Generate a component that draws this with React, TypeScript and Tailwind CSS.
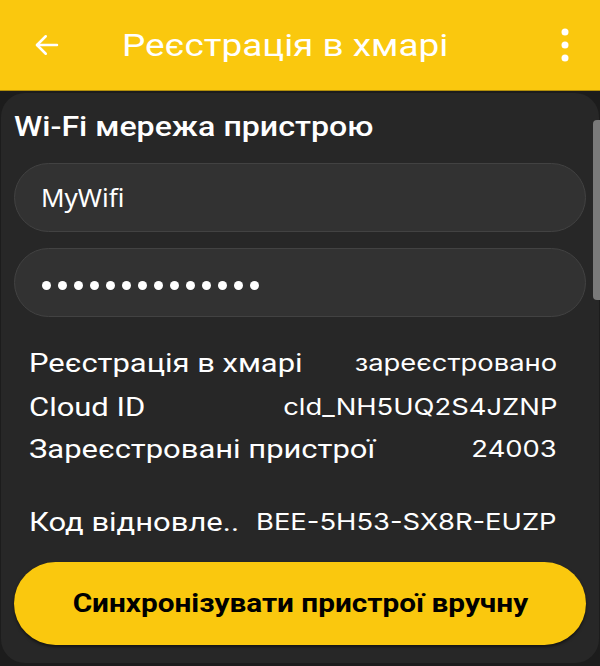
import React from "react";

const sx = "inline-block origin-left scale-x-[1.19] whitespace-nowrap";
const sxr = "inline-block origin-right scale-x-[1.19] whitespace-nowrap";

export default function App() {
  return (
    <div className="w-[600px] h-[666px] bg-[#1c1c1c] flex flex-col overflow-hidden" style={{ fontFamily: "Roboto, 'Noto Sans', sans-serif" }}>
      <div className="h-[91px] shrink-0 bg-[#fac80e] flex items-center pl-[32px] pr-[30px] border-b border-[#b38f0a]">
        <svg width="30" height="30" viewBox="0 0 24 24" fill="none" stroke="#fff" strokeWidth="2" strokeLinecap="round" strokeLinejoin="round">
          <path d="M20 12H4" />
          <path d="M11 5l-7 7 7 7" />
        </svg>
        <div className="ml-[60px] text-white text-[31px] leading-none flex-1">
          <span className={sx}>Реєстрація в хмарі</span>
        </div>
        <svg width="10" height="34" viewBox="0 0 10 34">
          <circle cx="5" cy="4" r="3.5" fill="#fff" />
          <circle cx="5" cy="17" r="3.5" fill="#fff" />
          <circle cx="5" cy="30" r="3.5" fill="#fff" />
        </svg>
      </div>
      <div className="relative mt-[2px] mx-[1px] flex-1 mb-[3px] bg-[#272727] rounded-[24px] flex flex-col px-[13px] pt-[16px]">
        <div className="absolute right-[-1px] top-[27px] w-[7px] h-[180px] rounded-l-[4px] bg-[#7a7a7a]" />
        <div className="text-white text-[27px] leading-[36px] font-medium">
          <span className={sx}>Wi-Fi мережа пристрою</span>
        </div>
        <div className="mt-[18px] h-[69px] rounded-full bg-[#323232] border border-[#424242] flex items-center pl-[26px] text-white text-[26px]" style={{ fontFamily: "'Noto Sans', sans-serif" }}>MyWifi</div>
        <div className="mt-[16px] h-[69px] rounded-full bg-[#323232] border border-[#424242] flex items-center pl-[27px] pt-[6px] gap-[7px]">
          {Array.from({ length: 14 }).map((_, i) => (
            <span key={i} className="w-[9px] h-[9px] rounded-full bg-white" />
          ))}
        </div>
        <div className="mt-[24px] pl-[15px] pr-[29px] text-white flex flex-col">
          <div className="flex justify-between items-center h-[44px]">
            <span className={`${sx} text-[26px]`}>Реєстрація в хмарі</span>
            <span className={`${sxr} text-[23px]`} style={{ fontFamily: "Inter, sans-serif" }}>зареєстровано</span>
          </div>
          <div className="flex justify-between items-center h-[44px]">
            <span className={`${sx} text-[26px]`}>Cloud ID</span>
            <span className={`${sxr} text-[23px]`} style={{ fontFamily: "Inter, sans-serif" }}>cld_NH5UQ2S4JZNP</span>
          </div>
          <div className="flex justify-between items-center h-[41px]">
            <span className={`${sx} text-[26px]`}>Зареєстровані пристрої</span>
            <span className={`${sxr} text-[23px]`} style={{ fontFamily: "Inter, sans-serif" }}>24003</span>
          </div>
          <div className="flex justify-between items-center h-[41px] mt-[32px]">
            <span className={`${sx} text-[26px]`}>Код відновле..</span>
            <span className={`${sxr} text-[23px]`} style={{ fontFamily: "Inter, sans-serif" }}>BEE-5H53-SX8R-EUZP</span>
          </div>
        </div>
        <button className="mt-[19px] h-[83px] rounded-full bg-[#fac80e] flex items-center justify-center text-black text-[25px] font-bold shadow-[0_2px_3px_rgba(0,0,0,0.5)]">
          <span className="inline-block scale-x-[1.19] whitespace-nowrap">Синхронізувати пристрої вручну</span>
        </button>
      </div>
    </div>
  );
}
